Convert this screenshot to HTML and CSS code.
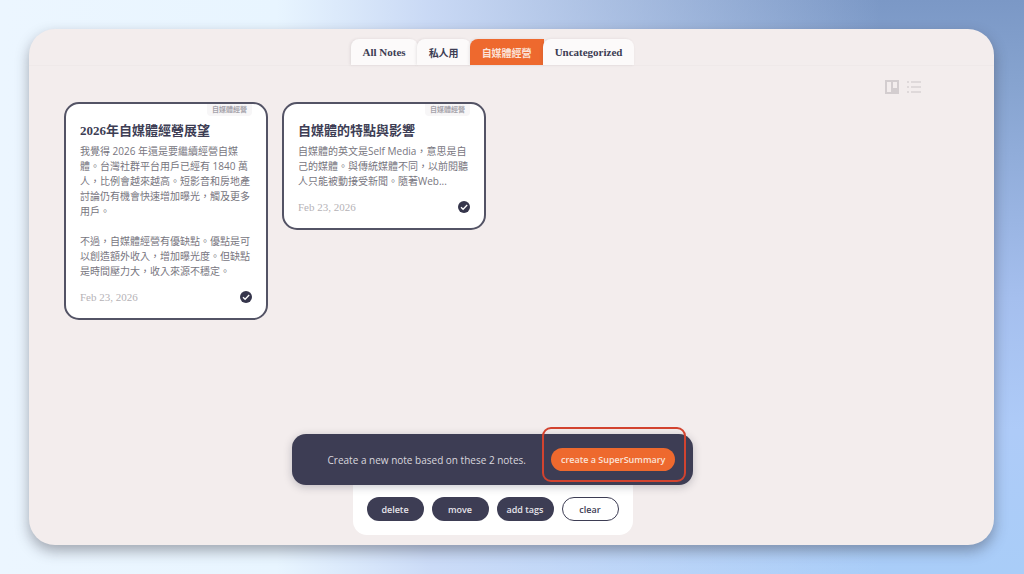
FILE: index.html
```html
<!DOCTYPE html>
<html lang="zh-Hant">
<head>
    <meta charset="UTF-8">
    <meta name="viewport" content="width=device-width, initial-scale=1.0">
    <title>Notes</title>
    <link rel="stylesheet" href="styles.css">
</head>
<body>
    <div class="app">
        <nav class="tabs">
            <button class="tab">All Notes</button>
            <button class="tab tab-zh">私人用</button>
            <button class="tab tab-zh active">自媒體經營</button>
            <button class="tab">Uncategorized</button>
        </nav>

        <main class="content">
            <div class="view-switch">
                <button class="view-btn" aria-label="Board view">
                    <svg width="14" height="14" viewBox="0 0 14 14">
                        <path fill="#d3cdcf" fill-rule="evenodd" d="M0 0h14v14H0zM2 2v10h4V2zM8 2v6h4V2z"/>
                    </svg>
                </button>
                <button class="view-btn" aria-label="List view">
                    <svg width="14" height="14" viewBox="0 0 14 14">
                        <path fill="#dfd9da" d="M0 1h2v2H0zM4 1h10v2H4zM0 6h2v2H0zM4 6h10v2H4zM0 11h2v2H0zM4 11h10v2H4z"/>
                    </svg>
                </button>
            </div>

            <div class="notes">
                <article class="note">
                    <span class="note-tag">自媒體經營</span>
                    <h2>2026年自媒體經營展望</h2>
                    <p>我覺得 2026 年還是要繼續經營自媒體。台灣社群平台用戶已經有 1840 萬人，比例會越來越高。短影音和房地產討論仍有機會快速增加曝光，觸及更多用戶。</p>
                    <p>不過，自媒體經營有優缺點。優點是可以創造額外收入，增加曝光度。但缺點是時間壓力大，收入來源不穩定。</p>
                    <footer class="note-footer">
                        <time datetime="2026-02-23">Feb 23, 2026</time>
                        <svg width="12" height="12" viewBox="0 0 12 12">
                            <circle cx="6" cy="6" r="6" fill="#35354b"/>
                            <path d="M3 6.2l2.1 2.1L9.2 4" fill="none" stroke="#fff" stroke-width="1.3"/>
                        </svg>
                    </footer>
                </article>

                <article class="note">
                    <span class="note-tag">自媒體經營</span>
                    <h2>自媒體的特點與影響</h2>
                    <p>自媒體的英文是Self Media，意思是自己的媒體。與傳統媒體不同，以前閱聽人只能被動接受新聞。隨著Web...</p>
                    <footer class="note-footer">
                        <time datetime="2026-02-23">Feb 23, 2026</time>
                        <svg width="12" height="12" viewBox="0 0 12 12">
                            <circle cx="6" cy="6" r="6" fill="#35354b"/>
                            <path d="M3 6.2l2.1 2.1L9.2 4" fill="none" stroke="#fff" stroke-width="1.3"/>
                        </svg>
                    </footer>
                </article>
            </div>

            <div class="actions">
                <div class="summary-bar">
                    <span>Create a new note based on these 2 notes.</span>
                    <div class="summary-action">
                        <button class="btn-summary">create a SuperSummary</button>
                    </div>
                </div>
                <div class="toolbar">
                    <button class="btn">delete</button>
                    <button class="btn">move</button>
                    <button class="btn">add tags</button>
                    <button class="btn btn-clear">clear</button>
                </div>
            </div>
        </main>
    </div>
</body>
</html>
```
FILE: styles.css
```css
* {
    box-sizing: border-box;
}
body {
    margin: 0;
    min-height: 100vh;
    padding: 29px 30px 29px 29px;
    display: flex;
    font-family: "Open Sans", "Noto Sans CJK TC", sans-serif;
    font-size: 10px;
    color: #3d3d54;
    background:
        linear-gradient(90deg, #ecf6ff 0%, #e8f5ff 27%, rgba(205, 220, 247, 0.95) 42%, rgba(120, 151, 196, 0) 86%),
        linear-gradient(180deg, #7b98c6 0%, #86a3cf 14%, #a5bfee 52%, #aecbf8 75%, #a9cdf8 100%);
}
button {
    font: inherit;
    border: none;
    padding: 0;
    cursor: pointer;
}
svg {
    display: block;
}
.app {
    flex: 1;
    display: flex;
    flex-direction: column;
    padding-top: 10px;
    background: #f3eded;
    border-radius: 26px;
    box-shadow: 0 6px 14px rgba(50, 50, 60, 0.4);
}

/* tabs */
.tabs {
    display: flex;
    justify-content: center;
    padding: 0 73px 0 35px;
    border-bottom: 1px solid #efe9e9;
}
.tab {
    height: 26px;
    padding: 0 12px;
    background: #fcfafa;
    color: #3d3d54;
    font-family: "Liberation Serif", "Noto Sans CJK TC", serif;
    font-size: 11px;
    font-weight: bold;
    border-radius: 8px 8px 0 0;
    box-shadow: -1px 0 3px rgba(60, 50, 60, 0.1);
}
.tab-zh {
    font-size: 10px;
}
.tab + .tab {
    margin-left: -1px;
}
.tab.active {
    background: #ee692e;
    color: #fbe3d8;
    border-radius: 8px 0 0 0;
}

/* notes */
.content {
    flex: 1;
    display: flex;
    flex-direction: column;
    padding: 14px 73px 10px 35px;
}
.view-switch {
    display: flex;
    justify-content: flex-end;
    gap: 8px;
}
.view-btn {
    background: none;
}
.notes {
    display: grid;
    grid-template-columns: repeat(auto-fill, 204px);
    align-items: start;
    gap: 14px;
    margin-top: 8px;
}
.note {
    position: relative;
    padding: 18px 14px 15px;
    background: #fff;
    border: 2px solid #535365;
    border-radius: 15px;
}
.note-tag {
    position: absolute;
    top: 0;
    right: 14px;
    padding: 0 5px;
    background: #f7f6f7;
    border-radius: 0 0 4px 4px;
    color: #a5a3ab;
    font-size: 7px;
    font-weight: bold;
    line-height: 12px;
}
.note h2 {
    margin: 0 0 5px;
    font-family: "Liberation Serif", "Noto Sans CJK TC", serif;
    font-size: 13px;
    line-height: 17px;
}
.note p {
    margin: 0 0 15px;
    color: #77757e;
    line-height: 15px;
}
.note-footer {
    display: flex;
    justify-content: space-between;
    align-items: center;
    margin-top: -3px;
    color: #b5b2b6;
    font-family: "Liberation Serif", serif;
    font-size: 11px;
    line-height: 12px;
}

/* bottom actions */
.actions {
    display: flex;
    flex-direction: column;
    align-items: center;
    margin-top: auto;
}
.summary-bar {
    position: relative;
    display: flex;
    align-items: center;
    gap: 25px;
    padding: 14px 18px 14px 36px;
    background: #3d3d54;
    color: #d9d7de;
    border-radius: 14px;
    box-shadow: 0 2px 8px rgba(40, 40, 60, 0.25);
}
.summary-action {
    position: relative;
}
/* highlight frame around the summary button */
.summary-action::after {
    content: "";
    position: absolute;
    inset: -21px -11px -11px -9px;
    border: 2px solid #d2432f;
    border-radius: 9px;
    pointer-events: none;
}
.btn-summary {
    height: 23px;
    padding: 0 10px;
    background: #ee692e;
    color: #fbe3d8;
    font-size: 9px;
    font-weight: 600;
    border-radius: 12px;
}
.toolbar {
    display: flex;
    gap: 8px;
    padding: 12px 14px 14px;
    background: #fff;
    border-radius: 0 0 14px 14px;
}
.btn {
    width: 57px;
    height: 24px;
    background: #3d3d54;
    color: #e6e4ea;
    font-size: 9px;
    font-weight: 600;
    border-radius: 12px;
}
.btn-clear {
    background: #fff;
    color: #3d3d54;
    border: 1px solid #3d3d54;
}
```
